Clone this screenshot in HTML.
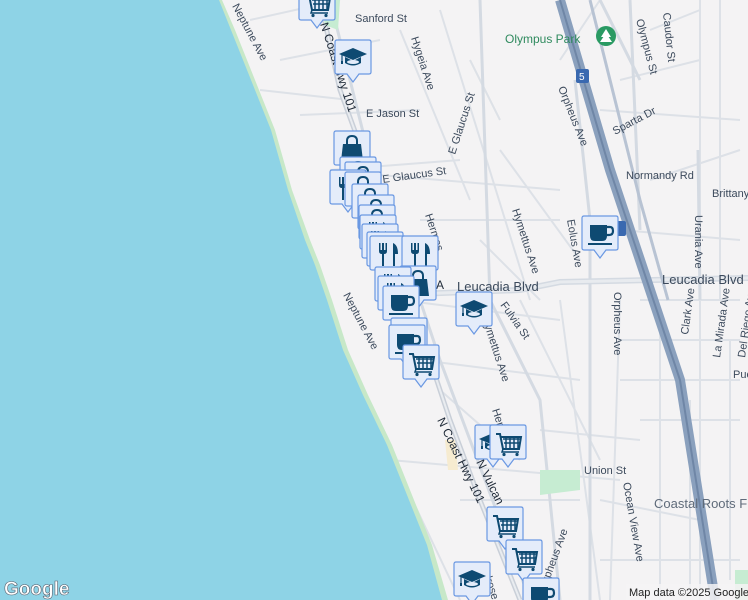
<!DOCTYPE html>
<html><head><meta charset="utf-8"><style>
html,body{margin:0;padding:0;width:748px;height:600px;overflow:hidden;background:#f4f3f4}
svg{display:block}
text{font-family:"Liberation Sans",sans-serif;fill:#3c4a5c;font-size:11px}
</style></head><body>
<svg width="748" height="600" viewBox="0 0 748 600" xmlns="http://www.w3.org/2000/svg">
<defs>
<g id="mk">
<path d="M2 0H34Q36 0 36 2V32Q36 34 34 34H24L18 42L12 34H2Q0 34 0 32V2Q0 0 2 0Z" fill="#e4ecfa" stroke="#6a98e2" stroke-width="1.2"/>
</g>
<g id="cart"><use href="#mk"/>
<path d="M6 9H10L13 24H29L31 12H11" fill="none" stroke="#0e4a72" stroke-width="2"/>
<path d="M13 14H30M14 18H30M16 12V23M20 12V23M24 12V23M28 12V23" stroke="#0e4a72" stroke-width="1.5"/>
<path d="M13 24L12 27H29" fill="none" stroke="#0e4a72" stroke-width="1.5"/>
<circle cx="14" cy="29.5" r="1.6" fill="#0e4a72"/><circle cx="27" cy="29.5" r="1.6" fill="#0e4a72"/></g>
<g id="cup"><use href="#mk"/>
<path d="M8 9H25V20Q25 25 20 25H13Q8 25 8 20Z" fill="#0e4a72"/>
<path d="M25 11H28Q31 11 31 15Q31 19 27 19H25" fill="none" stroke="#0e4a72" stroke-width="2.2"/>
<rect x="6" y="27" width="24" height="2" fill="#0e4a72"/></g>
<g id="fork"><use href="#mk"/>
<path d="M9 7V15Q9 18 12 18V30H14V18Q17 18 17 15V7H15.5V14H14V7H12V14H10.5V7Z" fill="#0e4a72"/>
<path d="M23 30V7Q28 9 28 18H25V30Z" fill="#0e4a72"/></g>
<g id="bag"><use href="#mk"/>
<path d="M9 13H27L29 30H7Z" fill="#0e4a72"/>
<path d="M13 15V10Q13 5 18 5Q23 5 23 10V15" fill="none" stroke="#0e4a72" stroke-width="2"/></g>
<g id="grad"><use href="#mk"/>
<path d="M4 14L18 8L32 14L18 20Z" fill="#0e4a72"/>
<path d="M10 17V23Q18 28 26 23V17L18 21Z" fill="#0e4a72"/>
<ellipse cx="18" cy="22" rx="6" ry="2" fill="#e4ecfa"/>
<path d="M7 15V22" stroke="#0e4a72" stroke-width="1.2"/><rect x="6" y="21" width="2" height="3" fill="#0e4a72"/></g>
</defs>

<!-- minor roads -->
<g stroke="#dde1e7" stroke-width="2" fill="none">
<path d="M250 20L340 0M280 60L380 40M260 90L350 100M300 115L420 110M400 30L470 200M440 10L530 300M470 60L500 120M500 150L580 260M330 170L460 160M380 175L560 190M420 220L560 220M480 240L540 300M400 300L560 320M420 360L580 380M440 390L520 460M390 460L620 480M460 500L580 500M540 430L640 440M600 500L700 520M600 560L740 560M640 420L740 420M620 380L740 380M620 340L740 340M640 300L740 300M620 230L740 240M650 180L740 150M600 110L740 120M620 80L700 60M650 30L700 10M720 0V300M700 0V600M730 340V580M660 330V600M690 400V590M360 390L460 600M340 420L420 600M600 0L560 60M560 300L600 600M620 300L610 600M520 300L600 460"/>
</g>
<g stroke="#d4dae2" stroke-width="3" fill="none">
<path d="M330 0L350 80L380 200L420 300L440 360L470 440L500 520L530 600"/>
<path d="M480 0L490 300L540 400L560 600"/>
<path d="M575 80L590 220L590 600"/>
<path d="M630 0L640 230"/>
<path d="M600 0L640 80"/>
<path d="M698 150L700 300"/>
</g>
<!-- Leucadia Blvd -->
<path d="M390 295L520 290L560 282L748 278" stroke="#d4dae2" stroke-width="6" fill="none"/>
<path d="M390 295L520 290L560 282L748 278" stroke="#e8ebef" stroke-width="3" fill="none"/>
<!-- coast hwy rail -->
<path d="M320 0L340 90L380 200L420 330L450 420L480 500L520 600" stroke="#c9cfd8" stroke-width="5" fill="none"/>
<path d="M320 0L340 90L380 200L420 330L450 420L480 500L520 600" stroke="#e9ecf0" stroke-width="2" fill="none"/>
<!-- I-5 -->
<path d="M560 0L610 170L640 260L680 380L715 600" stroke="#8aa0bd" stroke-width="10" fill="none"/>
<path d="M560 0L610 170L640 260L680 380L715 600" stroke="#6f86a6" stroke-width="2" fill="none"/>
<path d="M590 0L640 200L668 300" stroke="#b8c3d3" stroke-width="3" fill="none"/>
<!-- parks -->
<path d="M540 470L580 470L580 490L540 495Z" fill="#c6ecd2"/>
<path d="M735 570L748 570V600H735Z" fill="#c6ecd2"/>
<path d="M320 0L340 0L338 30L325 25Z" fill="#c6ecd2"/>
<path d="M445 440L455 440L458 470L448 470Z" fill="#f6ebd0"/>
<!-- water -->
<path d="M0 0H222L235 30L255 80L275 130L292 190L310 240L320 265L332 300L348 350L368 395L392 445L412 495L432 545L448 600H0Z" fill="#c7e8c8"/>
<path d="M0 0H219L231 30L251 80L271 130L288 190L305 240L315 265L327 300L343 350L363 395L387 445L407 495L427 545L442 600H0Z" fill="#8ed3e6"/>

<!-- labels -->
<text x="232" y="6" transform="rotate(62 232 6)">Neptune Ave</text>
<text x="343" y="295" transform="rotate(62 343 295)">Neptune Ave</text>
<text x="355" y="22">Sanford St</text>
<text x="366" y="117">E Jason St</text>
<text x="383" y="183" transform="rotate(-8 383 183)">E Glaucus St</text>
<text x="455" y="155" transform="rotate(-72 455 155)">E Glaucus St</text>
<text x="411" y="38" transform="rotate(72 411 38)">Hygeia Ave</text>
<text x="425" y="215" transform="rotate(72 425 215)">Hermes</text>
<text x="512" y="210" transform="rotate(72 512 210)">Hymettus Ave</text>
<text x="500" y="305" transform="rotate(55 500 305)">Fulvia St</text>
<text x="482" y="318" transform="rotate(72 482 318)">Hymettus Ave</text>
<text x="457" y="291" style="font-size:13px">Leucadia Blvd</text>
<text x="662" y="284" style="font-size:13px">Leucadia Blvd</text>
<text x="505" y="43" style="font-size:12px;fill:#2f8a5e">Olympus Park</text>
<circle cx="606" cy="36" r="10" fill="#2a9a63"/><path d="M606 29L611 37H601Z M606 33L612 42H600Z" fill="#fff"/>
<text x="636" y="20" transform="rotate(75 636 20)">Olympus St</text>
<text x="663" y="13" transform="rotate(84 663 13)">Caudor St</text>
<text x="558" y="88" transform="rotate(68 558 88)">Orpheus Ave</text>
<text x="615" y="135" transform="rotate(-28 615 135)">Sparta Dr</text>
<text x="626" y="179">Normandy Rd</text>
<text x="712" y="197">Brittany</text>
<text x="567" y="220" transform="rotate(80 567 220)">Eolus Ave</text>
<text x="695" y="215" transform="rotate(90 695 215)">Urania Ave</text>
<text x="688" y="335" transform="rotate(-82 688 335)">Clark Ave</text>
<text x="720" y="358" transform="rotate(-82 720 358)">La Mirada Ave</text>
<text x="745" y="358" transform="rotate(-82 745 358)">Del Riego Ave</text>
<text x="733" y="378">Puebla St</text>
<text x="614" y="292" transform="rotate(90 614 292)">Orpheus Ave</text>
<text x="584" y="474">Union St</text>
<text x="623" y="483" transform="rotate(80 623 483)">Ocean View Ave</text>
<text x="654" y="508" style="font-size:13px;fill:#5f6b7a">Coastal Roots F</text>
<text x="546" y="590" transform="rotate(-70 546 590)">Orpheus Ave</text>
<text x="437" y="420" transform="rotate(64 437 420)" style="font-size:12px;fill:#1f2a38">N Coast Hwy 101</text>
<text x="476" y="462" transform="rotate(64 476 462)" style="font-size:12px;fill:#1f2a38">N Vulcan</text>
<text x="492" y="410" transform="rotate(72 492 410)">Hermes</text>
<text x="480" y="563" transform="rotate(72 480 563)">Melrose</text>
<text x="320" y="24" transform="rotate(72 320 24)" style="font-size:12px;fill:#1f2a38">N Coast Hwy 101</text>
<text x="436" y="289" style="font-size:12px;fill:#1f2a38">A</text>
<rect x="606" y="221" width="20" height="15" fill="#3a69b0" rx="2"/><text x="611" y="233" style="fill:#fff;font-size:10px">5</text>
<rect x="576" y="69" width="13" height="14" fill="#3a69b0" rx="2"/><text x="579" y="80" style="fill:#fff;font-size:10px">5</text>

<!-- markers -->
<use href="#cart" x="299" y="-14"/>
<use href="#grad" x="335" y="40"/>
<use href="#bag" x="334" y="131"/>
<use href="#bag" x="340" y="157"/>
<use href="#bag" x="345" y="162"/>
<use href="#fork" x="330" y="170"/>
<use href="#bag" x="345" y="172"/>
<use href="#bag" x="352" y="184"/>
<use href="#bag" x="358" y="195"/>
<use href="#bag" x="359" y="205"/>
<use href="#fork" x="360" y="215"/>
<use href="#fork" x="362" y="224"/>
<use href="#fork" x="367" y="232"/>
<use href="#fork" x="370" y="236"/>
<use href="#fork" x="402" y="236"/>
<use href="#bag" x="400" y="266"/>
<use href="#fork" x="375" y="267"/>
<use href="#fork" x="378" y="276"/>
<use href="#cup" x="383" y="286"/>
<use href="#grad" x="456" y="292"/>
<use href="#cup" x="391" y="318"/>
<use href="#cup" x="389" y="325"/>
<use href="#cart" x="403" y="345"/>
<use href="#cup" x="582" y="216"/>
<use href="#grad" x="475" y="425"/>
<use href="#cart" x="490" y="425"/>
<use href="#cart" x="487" y="507"/>
<use href="#cart" x="506" y="540"/>
<use href="#grad" x="454" y="562"/>
<use href="#cup" x="523" y="578"/>

<text x="4" y="595" style="font-size:19px;fill:#fff;stroke:#5a6270;stroke-width:0.6;font-weight:bold">Google</text>
<rect x="626" y="584" width="122" height="16" fill="#f4f3f4" opacity="0.85"/>
<text x="629" y="596" style="font-size:11px;fill:#222">Map data ©2025 Google</text>
</svg>
</body></html>
